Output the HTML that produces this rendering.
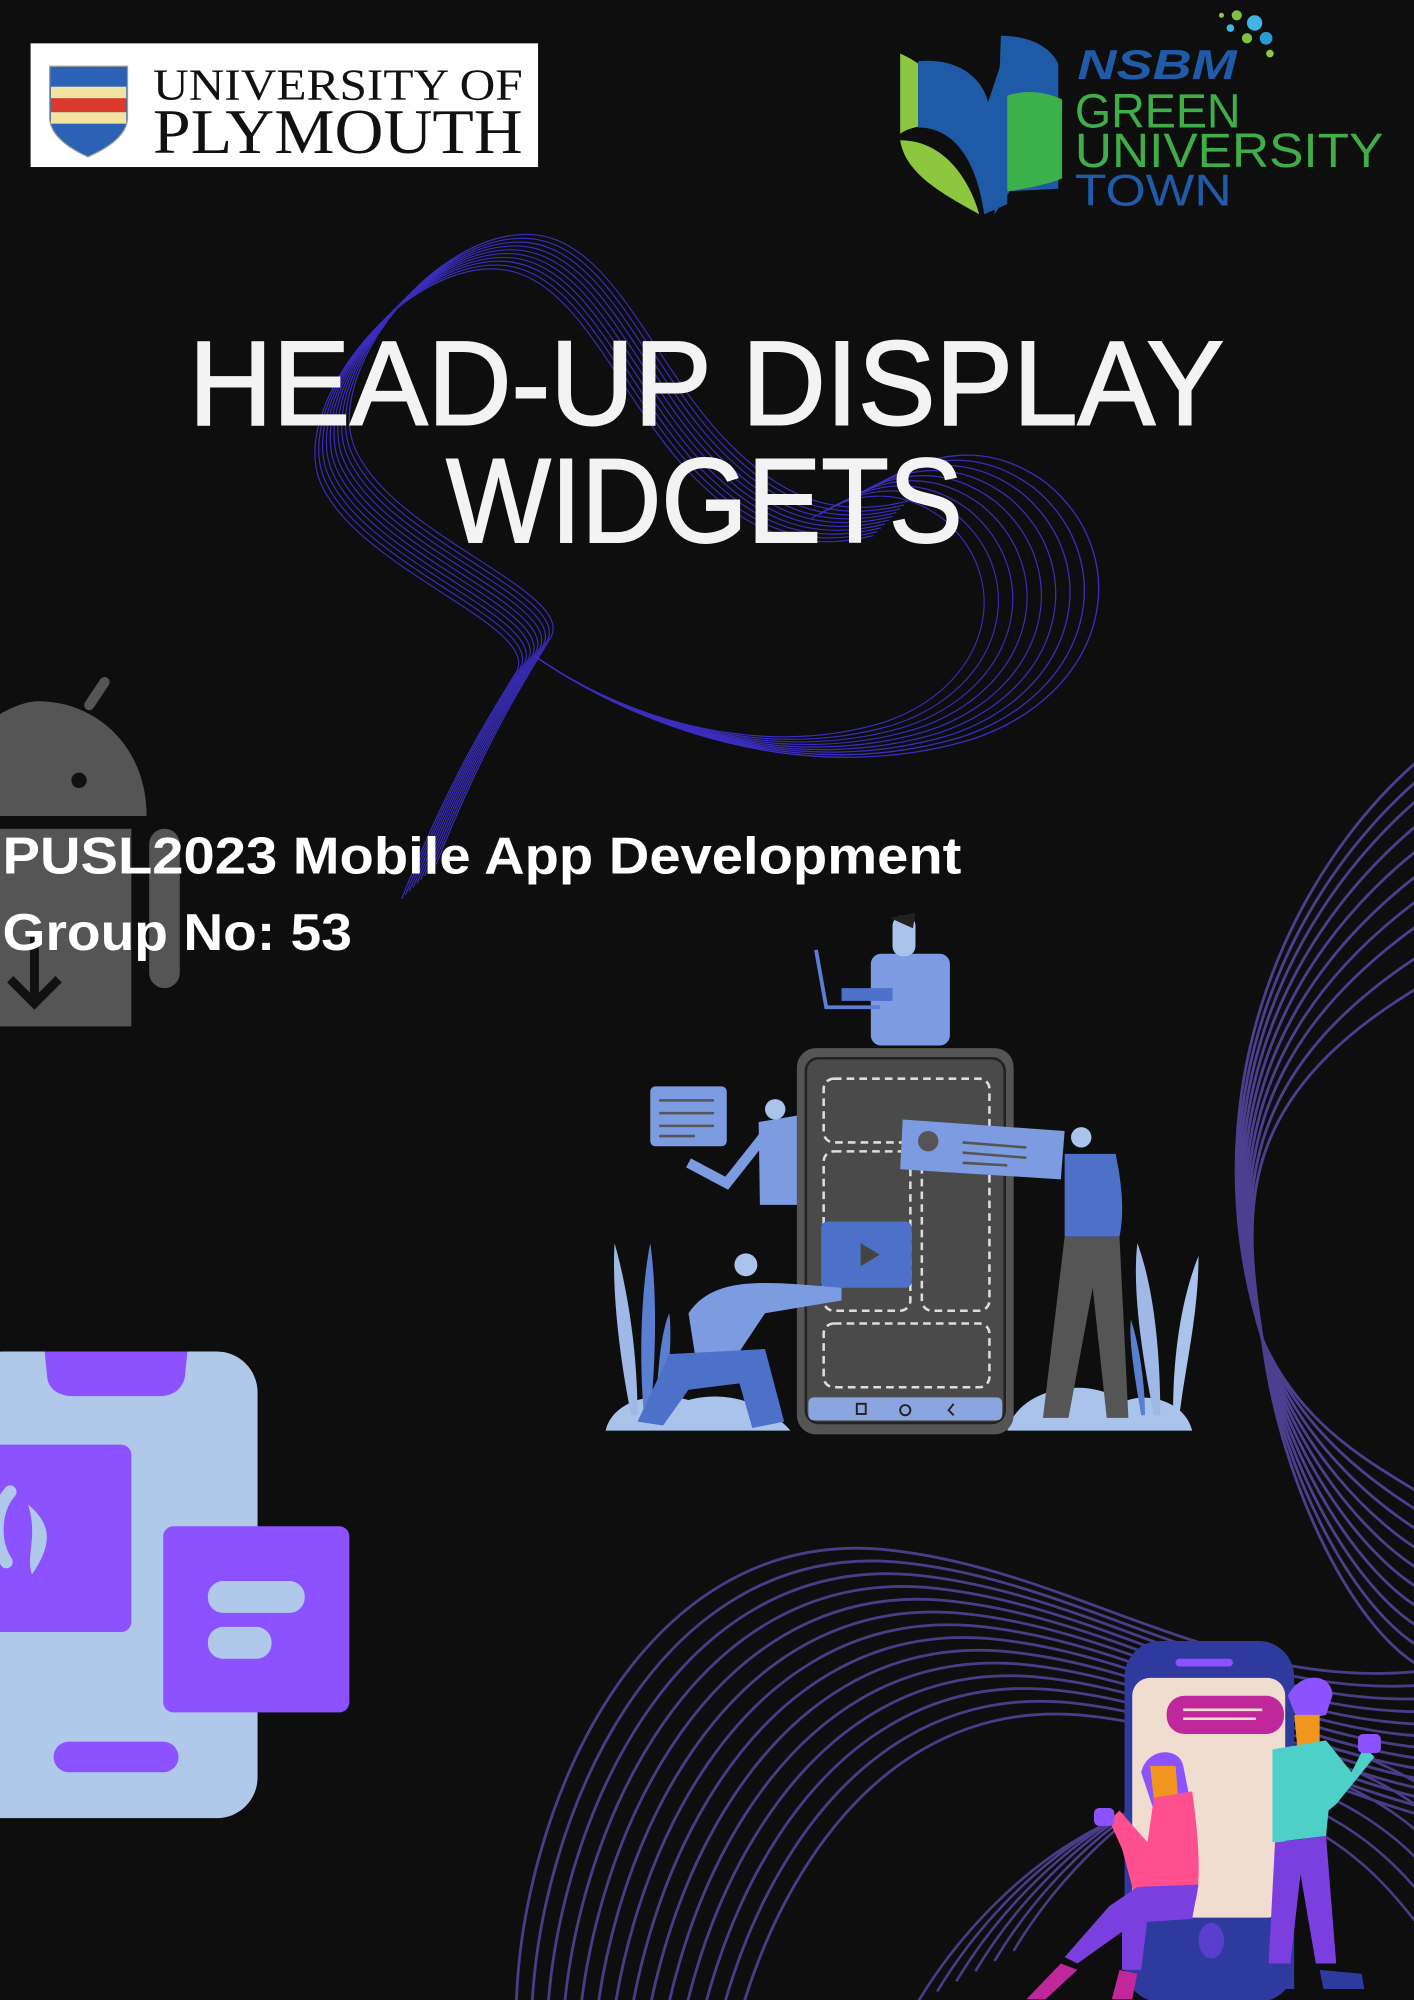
<!DOCTYPE html>
<html><head><meta charset="utf-8"><style>
html,body{margin:0;padding:0;background:#0e0e0e;width:1414px;height:2000px;overflow:hidden;}
svg{display:block;overflow:hidden;}
</style></head><body>
<svg width="1414" height="2000" viewBox="0 0 1109 1568.6" preserveAspectRatio="none" overflow="hidden" xmlns="http://www.w3.org/2000/svg">
<defs>
<path id="swA" d="M330,690 C370,590 400,545 420,512 C440,475 290,430 265,360 C245,300 330,192 405,196 C470,200 500,300 560,360 C600,400 640,420 700,405" fill="none" stroke="#3b2dbf" stroke-width="0.9"/>
<path id="swB" d="M420,515 C500,570 610,600 710,570 C800,540 820,450 760,400 C720,370 680,380 650,400" fill="none" stroke="#3b2dbf" stroke-width="0.9"/>
<path id="bw" d="M405,1570 C410,1420 500,1200 690,1215 C840,1228 960,1330 1120,1310" fill="none" stroke="#4a3d88" stroke-width="2.2"/>
<path id="bw2" d="M720,1570 C780,1470 900,1380 1000,1420 C1060,1445 1090,1480 1120,1520" fill="none" stroke="#4a3d88" stroke-width="2"/>
</defs>
<rect width="1109" height="1568.6" fill="#0e0e0e"/>

<g>
<use href="#swA"/><use href="#swA" transform="translate(-3,3)"/><use href="#swA" transform="translate(-6,6)"/><use href="#swA" transform="translate(-9,9)"/><use href="#swA" transform="translate(-12,12)"/><use href="#swA" transform="translate(-15,15)"/><use href="#swA" transform="translate(3,-3)"/><use href="#swA" transform="translate(6,-6)"/><use href="#swA" transform="translate(9,-9)"/><use href="#swA" transform="translate(12,-12)"/>
<use href="#swB"/><use href="#swB" transform="translate(420,515) scale(1.03) translate(-420,-515)"/><use href="#swB" transform="translate(420,515) scale(1.06) translate(-420,-515)"/><use href="#swB" transform="translate(420,515) scale(1.09) translate(-420,-515)"/><use href="#swB" transform="translate(420,515) scale(1.12) translate(-420,-515)"/><use href="#swB" transform="translate(420,515) scale(1.15) translate(-420,-515)"/><use href="#swB" transform="translate(420,515) scale(1.18) translate(-420,-515)"/><use href="#swB" transform="translate(420,515) scale(0.97) translate(-420,-515)"/><use href="#swB" transform="translate(420,515) scale(0.94) translate(-420,-515)"/>
</g>

<g fill="none" stroke="#4d3f8f" stroke-width="2.2">
<path d="M1120,590 C1010,680 930,860 990,1050 C1020,1120 1080,1150 1120,1175"/>
<path d="M1120,605 C1005,700 935,870 990,1050 C1020,1125 1080,1165 1120,1190"/>
<path d="M1120,620 C1000,720 940,880 990,1050 C1018,1130 1078,1180 1120,1205"/>
<path d="M1120,640 C995,740 945,890 990,1050 C1016,1135 1076,1195 1120,1220"/>
<path d="M1120,660 C990,760 950,900 990,1050 C1014,1140 1074,1210 1120,1235"/>
<path d="M1120,680 C985,780 955,910 990,1050 C1012,1145 1072,1225 1120,1250"/>
<path d="M1120,700 C980,800 960,920 990,1050 C1010,1150 1070,1240 1120,1265"/>
<path d="M1120,720 C975,820 965,930 990,1050 C1008,1155 1068,1255 1120,1280"/>
<path d="M1120,745 C970,840 970,940 990,1050 C1006,1160 1066,1270 1120,1295"/>
<path d="M1120,770 C965,860 975,950 990,1050 C1004,1165 1064,1285 1120,1310"/>
</g>
<g>
<use href="#bw"/><use href="#bw" transform="translate(12,10)"/><use href="#bw" transform="translate(24,20)"/><use href="#bw" transform="translate(36,30)"/><use href="#bw" transform="translate(48,40)"/><use href="#bw" transform="translate(60,50)"/><use href="#bw" transform="translate(72,60)"/><use href="#bw" transform="translate(84,70)"/><use href="#bw" transform="translate(96,80)"/><use href="#bw" transform="translate(108,90)"/><use href="#bw" transform="translate(120,100)"/><use href="#bw" transform="translate(132,110)"/><use href="#bw" transform="translate(144,120)"/><use href="#bw" transform="translate(156,130)"/>
<use href="#bw2"/><use href="#bw2" transform="translate(15,-8)"/><use href="#bw2" transform="translate(30,-16)"/><use href="#bw2" transform="translate(45,-24)"/><use href="#bw2" transform="translate(60,-32)"/><use href="#bw2" transform="translate(75,-40)"/>
</g>

<rect x="24" y="34" width="398" height="97" fill="#fff"/>
<path d="M39,52 L100,52 L100,92 C100,108 80,118 69,123 C58,118 39,108 39,92 Z" fill="#2b62b5" stroke="#999" stroke-width="1"/>
<rect x="40" y="68" width="59" height="10" fill="#f3e3a0"/>
<rect x="40" y="77" width="59" height="11" fill="#d93a2c"/>
<rect x="40" y="88" width="59" height="9" fill="#f3e3a0"/>
<text x="120" y="78" font-family="Liberation Serif, serif" font-size="35" textLength="290" lengthAdjust="spacingAndGlyphs" fill="#111">UNIVERSITY OF</text>
<text x="120" y="120" font-family="Liberation Serif, serif" font-size="50" textLength="290" lengthAdjust="spacingAndGlyphs" fill="#111">PLYMOUTH</text>

<path d="M706,42 C735,55 750,80 752,100 C730,95 712,100 706,105 Z" fill="#8dc63f"/>
<path d="M706,110 C740,110 760,140 768,168 C735,150 710,135 706,110 Z" fill="#8dc63f"/>
<path d="M720,48 C750,45 770,60 775,80 L790,35 L790,160 L772,168 C765,120 745,100 720,100 Z" fill="#1f5aa6"/>
<path d="M785,28 C805,28 823,35 830,50 L830,148 L792,150 L780,168 Z" fill="#1f5aa6"/>
<path d="M790,75 C805,70 820,72 833,78 L833,140 C820,145 805,148 790,150 Z" fill="#3bb14a"/>
<circle cx="970" cy="12" r="4" fill="#7fc241"/><circle cx="984" cy="18" r="6" fill="#3fb6e6"/><circle cx="993" cy="30" r="5" fill="#2a9ad2"/><circle cx="978" cy="30" r="4" fill="#7fc241"/><circle cx="996" cy="42" r="3" fill="#8dc63f"/><circle cx="965" cy="22" r="3" fill="#3fb6e6"/><circle cx="958" cy="12" r="2" fill="#8dc63f"/>
<text x="845" y="62" font-family="Liberation Sans, sans-serif" font-weight="bold" font-style="italic" font-size="33" textLength="125" lengthAdjust="spacingAndGlyphs" fill="#1f5ba8">NSBM</text>
<text x="843" y="100" font-family="Liberation Sans, sans-serif" font-size="38" textLength="130" lengthAdjust="spacingAndGlyphs" fill="#3fae49">GREEN</text>
<text x="843" y="131" font-family="Liberation Sans, sans-serif" font-size="38" textLength="242" lengthAdjust="spacingAndGlyphs" fill="#3fae49">UNIVERSITY</text>
<text x="843" y="161" font-family="Liberation Sans, sans-serif" font-size="35" textLength="123" lengthAdjust="spacingAndGlyphs" fill="#1f5ba8">TOWN</text>

<text x="148" y="333" font-family="Liberation Sans, sans-serif" font-size="94" textLength="812" lengthAdjust="spacingAndGlyphs" fill="#f3f3f3" stroke="#f3f3f3" stroke-width="1.5">HEAD-UP DISPLAY</text>
<text x="350" y="425" font-family="Liberation Sans, sans-serif" font-size="94" textLength="405" lengthAdjust="spacingAndGlyphs" fill="#f3f3f3" stroke="#f3f3f3" stroke-width="1.5">WIDGETS</text>

<g fill="#555">
<line x1="70" y1="553" x2="82" y2="535" stroke="#555" stroke-width="8" stroke-linecap="round"/>
<path d="M-50,640 C-50,585 5,550 30,550 C75,550 115,585 115,640 Z"/>
<rect x="-10" y="650" width="113" height="155"/>
<rect x="117" y="650" width="24" height="125" rx="12"/>
</g>
<circle cx="62" cy="612" r="6" fill="#111"/>
<path d="M27,735 L27,785 M8,768 L27,787 L46,768" stroke="#111" stroke-width="7" fill="none"/>

<text x="2" y="685" font-family="Liberation Sans, sans-serif" font-weight="bold" font-size="41" textLength="752" lengthAdjust="spacingAndGlyphs" fill="#fff">PUSL2023 Mobile App Development</text>
<text x="2" y="745" font-family="Liberation Sans, sans-serif" font-weight="bold" font-size="41" textLength="274" lengthAdjust="spacingAndGlyphs" fill="#fff">Group No: 53</text>

<g>
<path d="M475,1122 C480,1100 510,1090 540,1098 C570,1090 600,1100 620,1122 Z" fill="#a9c3ea"/>
<path d="M790,1122 C800,1085 860,1080 880,1100 C900,1090 930,1100 935,1122 Z" fill="#a9c3ea"/>
<path d="M495,1110 C485,1060 480,1010 482,975 C492,1010 500,1060 500,1110 Z" fill="#9fb8e6"/>
<path d="M505,1110 C500,1050 505,1000 510,975 C515,1010 515,1060 510,1110 Z" fill="#5b7fd0"/>
<path d="M515,1110 C515,1070 520,1040 525,1030 C528,1060 522,1090 518,1110 Z" fill="#5b7fd0"/>
<path d="M905,1110 C895,1060 888,1010 892,975 C905,1010 910,1060 910,1110 Z" fill="#9fb8e6"/>
<path d="M920,1110 C920,1050 930,1010 940,985 C940,1030 930,1070 925,1110 Z" fill="#a9c3ea"/>
<path d="M895,1110 C890,1080 885,1050 887,1035 C895,1060 898,1090 898,1110 Z" fill="#5b7fd0"/>
<rect x="625" y="822" width="170" height="303" rx="15" fill="#555"/>
<rect x="632" y="830" width="156" height="286" rx="10" fill="#4a4a4a" stroke="#222" stroke-width="2"/>
<rect x="646" y="846" width="130" height="50" rx="8" fill="none" stroke="#ddd" stroke-width="2" stroke-dasharray="6 4"/>
<rect x="646" y="903" width="68" height="125" rx="8" fill="none" stroke="#ddd" stroke-width="2" stroke-dasharray="6 4"/>
<rect x="723" y="903" width="53" height="125" rx="8" fill="none" stroke="#ddd" stroke-width="2" stroke-dasharray="6 4"/>
<rect x="646" y="1038" width="130" height="50" rx="8" fill="none" stroke="#ddd" stroke-width="2" stroke-dasharray="6 4"/>
<rect x="634" y="1096" width="152" height="18" rx="4" fill="#8aa5e0"/>
<rect x="672" y="1101" width="7" height="8" fill="none" stroke="#222" stroke-width="1.5"/>
<circle cx="710" cy="1106" r="4" fill="none" stroke="#222" stroke-width="1.5"/>
<path d="M748,1101 L744,1106 L748,1110" fill="none" stroke="#222" stroke-width="1.5"/>
<rect x="644" y="958" width="71" height="52" rx="5" fill="#4d70c9"/>
<path d="M675,975 L690,984 L675,993 Z" fill="#444"/>
<rect x="683" y="748" width="62" height="72" rx="8" fill="#7c9be0"/>
<rect x="700" y="718" width="18" height="32" rx="8" fill="#a9c3ea"/>
<path d="M698,720 L718,716 L716,728 Z" fill="#222"/>
<path d="M640,745 L648,790 L690,790" stroke="#5b7fd0" stroke-width="3" fill="none"/>
<rect x="660" y="775" width="40" height="10" fill="#4d70c9"/>
<rect x="510" y="852" width="60" height="47" rx="4" fill="#7c9be0"/>
<g stroke="#555" stroke-width="2"><line x1="517" y1="863" x2="560" y2="863"/><line x1="517" y1="873" x2="560" y2="873"/><line x1="517" y1="883" x2="560" y2="883"/><line x1="517" y1="891" x2="545" y2="891"/></g>
<path d="M595,880 L625,875 L625,945 L596,945 Z" fill="#7c9be0"/>
<path d="M600,890 L570,928 L540,912" stroke="#7c9be0" stroke-width="8" fill="none"/>
<circle cx="608" cy="870" r="8" fill="#a9c3ea"/>
<path d="M540,1030 C560,1000 600,1005 660,1010 L660,1020 L600,1030 L580,1060 L545,1062 Z" fill="#7c9be0"/>
<path d="M525,1062 L600,1058 L615,1115 L590,1120 L580,1085 L540,1090 L520,1118 L500,1115 Z" fill="#4d70c9"/>
<circle cx="585" cy="992" r="9" fill="#a9c3ea"/>
<path d="M708,878 L835,887 L832,925 L706,917 Z" fill="#7c9be0"/>
<circle cx="728" cy="895" r="8" fill="#555"/>
<g stroke="#555" stroke-width="2"><line x1="755" y1="896" x2="805" y2="900"/><line x1="755" y1="904" x2="805" y2="908"/><line x1="755" y1="912" x2="790" y2="914"/></g>
<circle cx="848" cy="892" r="8" fill="#a9c3ea"/>
<path d="M835,905 L875,905 C880,930 882,950 878,970 L835,970 Z" fill="#4d70c9"/>
<path d="M835,970 L878,970 L885,1112 L868,1112 L857,1010 L838,1112 L818,1112 Z" fill="#555"/>
</g>

<rect x="-30" y="1060" width="232" height="366" rx="32" fill="#b0c9ea"/>
<path d="M35,1060 L147,1060 L145,1080 C143,1090 135,1095 125,1095 L57,1095 C47,1095 38,1090 37,1080 Z" fill="#8c52ff"/>
<rect x="-20" y="1133" width="123" height="147" rx="8" fill="#8c52ff"/>
<path d="M8,1170 C-5,1185 -5,1210 5,1225" stroke="#b0c9ea" stroke-width="10" fill="none" stroke-linecap="round"/>
<path d="M22,1180 C40,1195 42,1210 25,1235 C20,1220 30,1205 22,1180 Z" fill="#b0c9ea"/>
<rect x="128" y="1197" width="146" height="146" rx="8" fill="#8c52ff"/>
<rect x="163" y="1240" width="76" height="25" rx="12" fill="#b0c9ea"/>
<rect x="163" y="1276" width="50" height="25" rx="12" fill="#b0c9ea"/>
<rect x="42" y="1366" width="98" height="24" rx="12" fill="#8c52ff"/>

<rect x="882" y="1287" width="133" height="283" rx="28" fill="#2f3a9e"/>
<rect x="922" y="1301" width="45" height="6" rx="3" fill="#8c52ff"/>
<rect x="888" y="1316" width="120" height="188" rx="14" fill="#f1ddd0"/>
<rect x="915" y="1330" width="92" height="30" rx="14" fill="#c0279b"/>
<line x1="928" y1="1341" x2="990" y2="1341" stroke="#f1ddd0" stroke-width="2"/><line x1="928" y1="1348" x2="985" y2="1348" stroke="#f1ddd0" stroke-width="2"/>
<ellipse cx="950" cy="1522" rx="10" ry="14" fill="#5a3fcf"/>
<path d="M1010,1330 C1020,1310 1045,1312 1045,1330 L1040,1345 L1018,1350 Z" fill="#8c52ff"/>
<path d="M1015,1345 L1035,1345 L1035,1370 L1018,1375 Z" fill="#f0961e"/>
<path d="M998,1372 L1040,1365 L1060,1390 L1070,1370 L1078,1378 L1048,1415 L1042,1420 L1040,1440 L998,1445 Z" fill="#4dd0c7"/>
<rect x="1065" y="1360" width="18" height="15" rx="4" fill="#8c52ff"/>
<path d="M1000,1445 L1040,1440 L1048,1540 L1032,1540 L1020,1470 L1012,1540 L995,1540 Z" fill="#7b3fe0"/>
<path d="M990,1545 L1015,1545 L1015,1560 L990,1560 Z M1035,1545 L1068,1548 L1070,1560 L1038,1560 Z" fill="#2f3a9e"/>
<path d="M895,1390 C900,1370 925,1370 928,1385 L935,1420 L905,1420 Z" fill="#8c52ff"/>
<path d="M902,1385 L922,1385 L924,1410 L905,1412 Z" fill="#f0961e"/>
<path d="M905,1410 L935,1405 C940,1440 942,1470 938,1490 L892,1495 L880,1450 L870,1428 L878,1420 L900,1445 Z" fill="#ff4f8f"/>
<rect x="858" y="1418" width="16" height="14" rx="4" fill="#8c52ff"/>
<path d="M892,1480 L940,1478 L935,1505 L890,1508 L845,1540 L835,1535 L870,1495 Z" fill="#7b3fe0"/>
<path d="M880,1505 L900,1505 L895,1545 L880,1545 Z" fill="#7b3fe0"/>
<path d="M832,1540 L845,1545 L820,1568 L805,1568 Z M878,1545 L892,1548 L888,1568 L872,1568 Z" fill="#c0279b"/>
</svg>
</body></html>
